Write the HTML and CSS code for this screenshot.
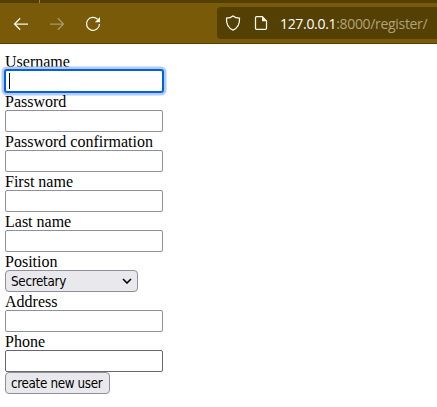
FILE: index.html
```html
<!DOCTYPE html>
<html lang="en">
<head>
<meta charset="utf-8">
<title>Register</title>
<link rel="stylesheet" href="styles.css">
</head>
<body>
<div class="tabstrip"><span class="tab-edge"></span></div>
<header class="toolbar">
  <nav class="nav">
    <svg class="icon" viewBox="0 0 16 16"><path d="M15 8H1.500M7.200 2.200 1.500 8l5.700 5.800"/></svg>
    <svg class="icon disabled" viewBox="0 0 16 16"><path d="M1 8h13.500M8.800 2.200 14.500 8l-5.700 5.800"/></svg>
    <svg class="icon" viewBox="0 0 16 16"><path d="M12.700 3.400A6.500 6.500 0 1 0 14.500 8"/><path class="solid" d="M15 1v5.200H9.800z"/></svg>
  </nav>
  <div class="urlbar">
    <svg class="icon" viewBox="0 0 16 16"><path d="M8 .9C6.300 2.300 3.700 3 1.500 3.100c-.4 5.500 1.500 9.700 6.500 12 5-2.300 6.900-6.500 6.500-12C12.300 3 9.700 2.300 8 .9z"/></svg>
    <svg class="icon page" viewBox="0 0 16 16"><path d="M3.500 1.700h5.800l4.200 4.200v7.400q0 1-1 1h-9q-1 0-1-1V2.700q0-1 1-1z"/><path class="solid" d="M9 1.500v4.800h4.800z"/></svg>
    <span class="url"><b>127.0.0.1</b>:8000/register/</span>
  </div>
</header>
<form class="form">
  <label for="username">Username</label>
  <div class="field focused" id="username"><span class="caret"></span></div>
  <label>Password</label>
  <div class="field"></div>
  <label>Password confirmation</label>
  <div class="field"></div>
  <label>First name</label>
  <div class="field"></div>
  <label>Last name</label>
  <div class="field"></div>
  <label>Position</label>
  <div class="select"><span>Secretary</span><svg class="chevron" viewBox="0 0 10 6"><path d="M1 1l4 4 4-4"/></svg></div>
  <label>Address</label>
  <div class="field"></div>
  <label>Phone</label>
  <div class="field dark"></div>
  <button type="button" class="button">create new user</button>
</form>
</body>
</html>
```
FILE: styles.css
```css
* { box-sizing: border-box; }
body { margin: 0; background: #fff; overflow: hidden; }
.tabstrip { height: 3px; background: #554003; }
.tab-edge { display: block; width: 1px; height: 3px; margin-left: 39px; background: #91805a; }
.toolbar {
  display: flex;
  height: 41px;
  padding-top: 4px;
  background: #785a08;
  border-bottom: 1px solid #554003;
}
.nav { display: flex; flex: none; gap: 20px; width: 217px; height: 32px; padding: 1px 0 0 13px; align-items: center; }
.icon { flex: none; width: 16px; height: 16px; fill: none; stroke: #fbf8ef; stroke-width: 1.25; }
.icon .solid { fill: #fbf8ef; stroke: none; }
.disabled { opacity: .4; }
.urlbar {
  display: flex;
  align-items: center;
  flex: 1;
  min-width: 0;
  height: 32px;
  padding-left: 8px;
  background: #554003;
  border-radius: 4px 0 0 4px;
}
.page { margin-left: 12px; }
.url {
  margin-left: 11px;
  font: 14px/20px "Open Sans", "Noto Sans", sans-serif;
  letter-spacing: -.32px;
  color: #b0a27c;
  white-space: nowrap;
  padding-top: 1px;
}
.url b { font-weight: 400; color: #fff; }
.form { display: flex; flex-direction: column; align-items: flex-start; padding: 8px 5px; }
label { height: 18px; font: 16px/20px "Liberation Serif", serif; color: #000; white-space: nowrap; }
.field {
  width: 158px;
  height: 22px;
  border: 1px solid #8f8f9d;
  border-radius: 2px;
  background: #fff;
}
.field.dark { border-color: #676774; }
.field.focused {
  padding: 2px 0 0 3px;
  border-color: #0061e0;
  box-shadow: 0 0 0 1px #0061e0, 0 0 0 3.500px #b3cbf3;
}
.caret { display: block; width: 1px; height: 16px; background: #000; }
.select, .button {
  height: 22px;
  border: 1px solid #8f8f9d;
  border-radius: 4px;
  background: #e9e9ed;
  color: #000;
  font: 13.333px/20px "DejaVu Sans Condensed", "DejaVu Sans", sans-serif;
  white-space: nowrap;
}
.select { display: flex; align-items: center; justify-content: space-between; width: 133px; padding: 0 5px; }
.select span { letter-spacing: -.3px; padding-top: 1px; }
.chevron { width: 10px; height: 6px; fill: none; stroke: #000; stroke-width: 1.6; }
.button { width: 105px; margin: 0; padding: 1px 0 0 5px; text-align: left; letter-spacing: -.35px; }
```
